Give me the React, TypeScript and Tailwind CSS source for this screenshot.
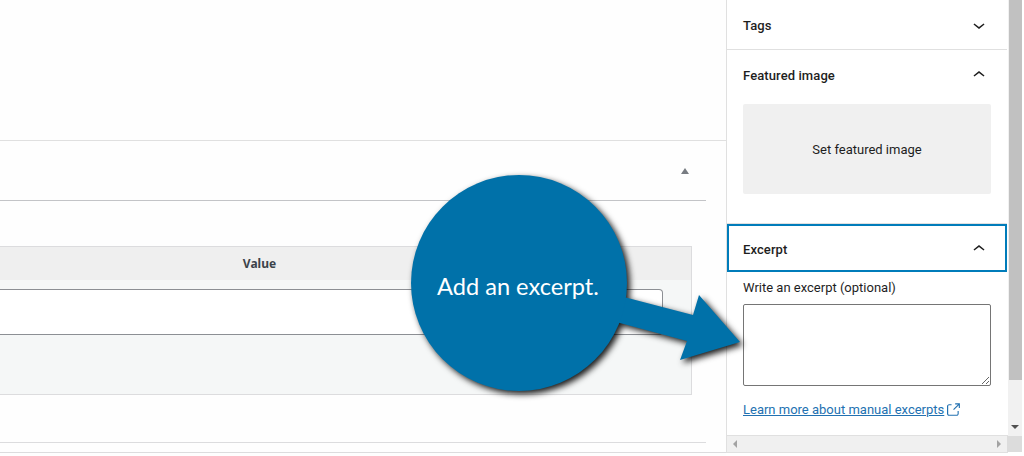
const ChevronUp = () => (
  <svg viewBox="0 0 24 24" className="w-6 h-6 fill-[#1e1e1e]">
    <path d="M6.5 12.4L12 8l5.5 4.4-.9 1.2L12 10l-4.6 3.6-.9-1.2z" />
  </svg>
);

const ChevronDown = () => (
  <svg viewBox="0 0 24 24" className="w-6 h-6 fill-[#1e1e1e]">
    <path d="M17.5 11.6L12 16l-5.5-4.4.9-1.2L12 14l4.6-3.6z" />
  </svg>
);

const App = () => {
  return (
    <div className="relative flex w-[1024px] h-[456px] overflow-hidden bg-white font-['Roboto',sans-serif] text-[13px] text-[#1e1e1e]">
      {/* Main editor column */}
      <main className="w-[726px] shrink-0 pt-[140px] bg-[#fefefe]">
        <section className="border-t border-[#e0e0e0]">
          <div className="w-[706px] h-[60px] flex items-center justify-end pr-[17px] border-b border-[#c3c4c7]">
            <span className="w-0 h-0 border-x-[4px] border-x-transparent border-b-[6px] border-b-[#787c82]" />
          </div>
          <div className="w-[692px] mt-[45px] h-[149px] border border-l-0 border-[#dcdcde] bg-[#f5f7f7]">
            <div className="h-[33px] bg-[#efefef] flex items-center">
              <span className="w-[519px] text-center text-[12px] font-bold text-[#3c434a] font-['Noto_Sans',sans-serif]">Value</span>
            </div>
            <div className="pt-[9px]">
              <div className="w-[663px] h-[46px] bg-white border border-l-0 border-[#8c8f94] rounded-r-[4px]" />
            </div>
          </div>
          <div className="w-[706px] h-[48px] border-b border-[#dcdcde]" />
          <div className="h-[10px] border-b border-[#dcdcde]" />
        </section>
      </main>

      {/* Settings sidebar */}
      <aside className="w-[282px] h-[453px] shrink-0 flex flex-col border-l border-b border-[#e0e0e0]">
        <div className="w-[280px] flex-1">
          <div className="h-[50px] flex items-center justify-between pl-[16px] pr-[16px] border-b border-[#e0e0e0] font-medium tracking-[0.1px]">
            <span className="pt-[2px]">Tags</span>
            <ChevronDown />
          </div>
          <div className="h-[174px] px-[16px] border-b border-[#e0e0e0]">
            <div className="h-[54px] pb-[4px] flex items-center justify-between font-medium tracking-[0.1px]">
              <span className="pt-[2px]">Featured image</span>
              <ChevronUp />
            </div>
            <div className="h-[90px] pt-[2px] flex items-center justify-center rounded-[2px] bg-[#f0f0f0]">Set featured image</div>
          </div>
          <div className="h-[48px] flex items-center justify-between px-[14px] border-2 border-[#007cba] font-medium tracking-[0.1px]">
            <span className="pt-[3px]">Excerpt</span>
            <span className="pt-[1px]">
              <ChevronUp />
            </span>
          </div>
          <div className="px-[16px] pt-[7px]">
            <div className="h-[19px] leading-[18px]">Write an excerpt (optional)</div>
            <textarea className="block w-[248px] h-[82px] mt-[6px] bg-white border border-[#757575] rounded-[2px]" />
            <div className="flex items-center mt-[14px] text-[#2271b1]">
              <span className="underline">Learn more about manual excerpts</span>
              <svg viewBox="0 0 24 24" className="w-[18px] h-[18px] fill-[#2271b1]">
                <path d="M18.2 17c0 .7-.6 1.3-1.3 1.3h-10c-.7 0-1.3-.6-1.3-1.3V7c0-.7.6-1.3 1.3-1.3h3.2V4.2H6.8C5.3 4.2 4 5.5 4 7v10c0 1.5 1.2 2.8 2.8 2.8h10c1.5 0 2.8-1.2 2.8-2.8v-3.6h-1.5V17zM14.9 3v1.5h3.7l-6.4 6.4 1.1 1.1 6.4-6.4v3.7h1.5V3h-6.3z" />
              </svg>
            </div>
          </div>
        </div>
        <div className="w-[295px] h-[17px] flex border-t border-[#e0e0e0] bg-[#f0f0f0]">
          <div className="w-[280px] flex items-center justify-between px-[6px]">
            <span className="w-0 h-0 border-y-[4px] border-y-transparent border-r-[4px] border-r-[#a3a3a3]" />
            <span className="w-0 h-0 border-y-[4px] border-y-transparent border-l-[4px] border-l-[#a3a3a3]" />
          </div>
          <div className="w-[15px] bg-[#dcdcdc]" />
        </div>
      </aside>

      {/* Vertical scrollbar */}
      <div className="absolute left-[1008px] top-0 w-[14px] h-[436px] bg-[#f1f1f1]">
        <div className="mx-auto w-[13px] h-[380px] bg-[#c1c1c1]" />
        <span className="absolute left-[3px] top-[425px] w-0 h-0 border-x-[4px] border-x-transparent border-t-[4px] border-t-[#505050]" />
      </div>

      {/* Screenshot annotation */}
      <svg viewBox="0 0 1024 456" className="absolute left-0 top-0 w-[1024px] h-[456px] drop-shadow-[3px_3px_3px_rgba(0,0,0,0.9)]">
        <path
          fill="#0071a9"
          d="M622 296.5L693 315L699 295L740 342L680 360L687 341L616 322Z"
        />
        <circle cx="519" cy="283" r="108" fill="#0071a9" />
      </svg>
      <div className="absolute left-[437px] top-[270px] text-[23.6px] leading-[32px] text-white font-['Lato',sans-serif]">
        Add an excerpt.
      </div>
    </div>
  );
};

export default App;
